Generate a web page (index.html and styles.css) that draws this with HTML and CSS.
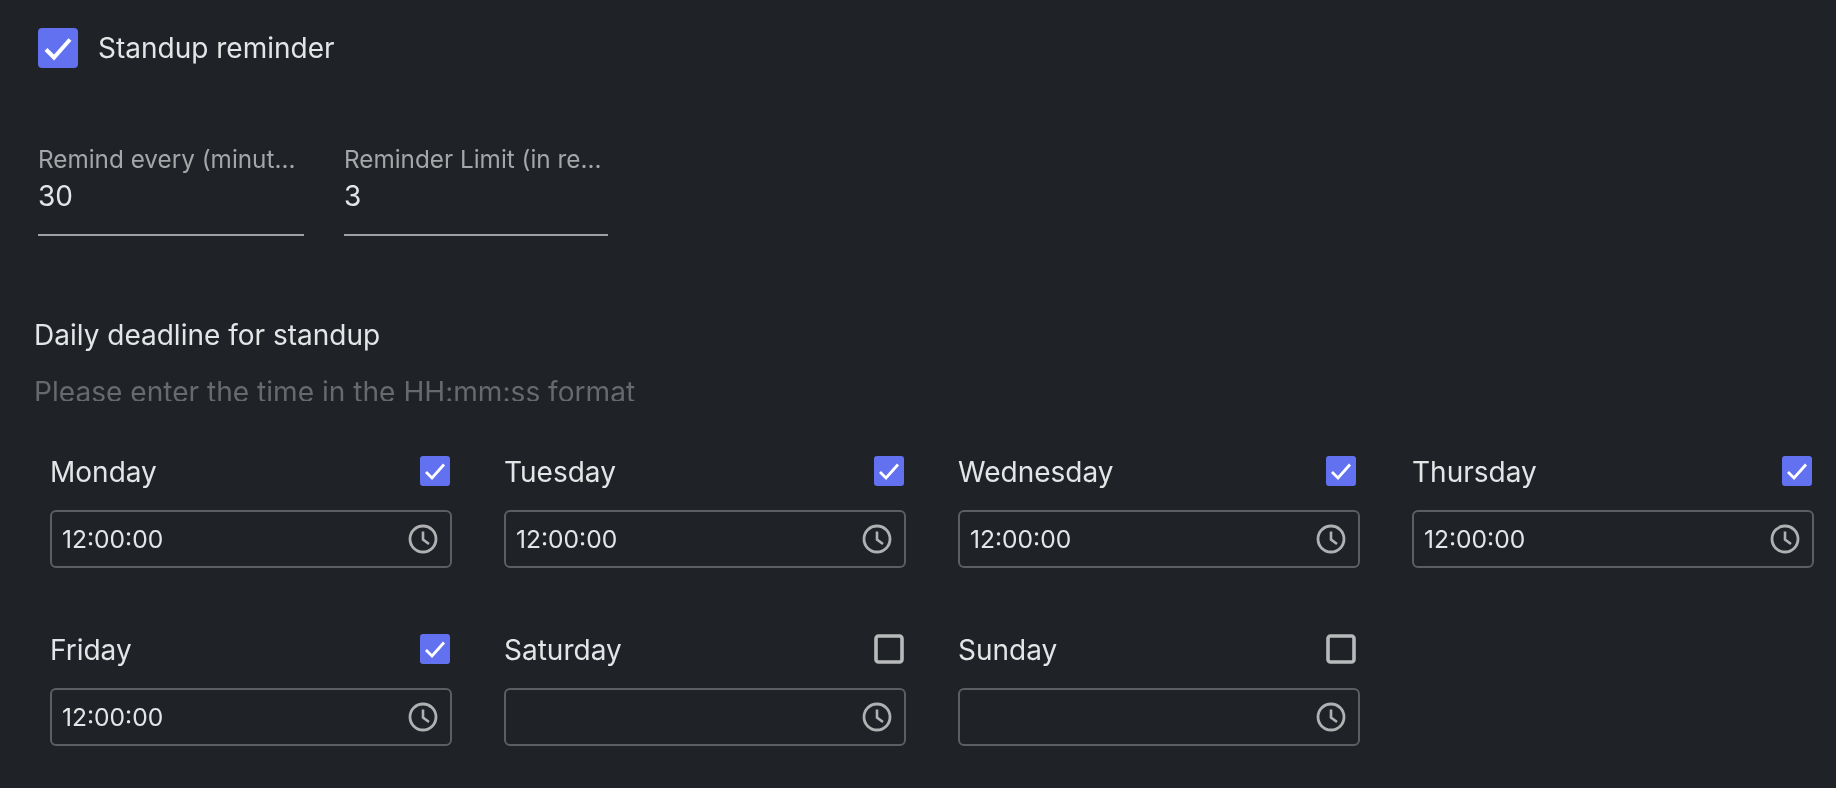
FILE: index.html
```html
<!DOCTYPE html>
<html lang="en">
<head>
<meta charset="utf-8">
<title>Standup reminder</title>
<link rel="stylesheet" href="styles.css">
</head>
<body>
<main class="page">
  <label class="main-toggle">
    <svg class="check check-lg" viewBox="0 0 40 40"><rect width="40" height="40" rx="4" fill="#6271f0"/><path d="M8 21.500 16 29.500 32 11.500" fill="none" stroke="#fff" stroke-width="4"/></svg>
    <span>Standup reminder</span>
  </label>
  <div class="limits">
    <div class="field field-a"><div class="field-label">Remind every (minut...</div><div class="field-value">30</div></div>
    <div class="field field-b"><div class="field-label">Reminder Limit (in re...</div><div class="field-value">3</div></div>
  </div>
  <section class="deadline">
    <h2 class="deadline-title">Daily deadline for standup</h2>
    <div class="deadline-clip"><p class="deadline-help">Please enter the time in the HH:mm:ss format</p></div>
  </section>
  <div class="days">
    <div class="day">
      <div class="day-head"><span>Monday</span><svg class="check" viewBox="0 0 30 30"><rect width="30" height="30" rx="3" fill="#6271f0"/><path d="M6 16 12 22 24 8.500" fill="none" stroke="#fff" stroke-width="2.800"/></svg></div>
      <div class="time-box"><span>12:00:00</span><svg class="clock" viewBox="0 0 30 30"><circle cx="15" cy="15" r="13" fill="none" stroke="#b0b1b3" stroke-width="2.800"/><path d="M15 7.500v8l6 4.500" fill="none" stroke="#b0b1b3" stroke-width="2.600"/></svg></div>
    </div>
    <div class="day">
      <div class="day-head"><span>Tuesday</span><svg class="check" viewBox="0 0 30 30"><rect width="30" height="30" rx="3" fill="#6271f0"/><path d="M6 16 12 22 24 8.500" fill="none" stroke="#fff" stroke-width="2.800"/></svg></div>
      <div class="time-box"><span>12:00:00</span><svg class="clock" viewBox="0 0 30 30"><circle cx="15" cy="15" r="13" fill="none" stroke="#b0b1b3" stroke-width="2.800"/><path d="M15 7.500v8l6 4.500" fill="none" stroke="#b0b1b3" stroke-width="2.600"/></svg></div>
    </div>
    <div class="day">
      <div class="day-head"><span>Wednesday</span><svg class="check" viewBox="0 0 30 30"><rect width="30" height="30" rx="3" fill="#6271f0"/><path d="M6 16 12 22 24 8.500" fill="none" stroke="#fff" stroke-width="2.800"/></svg></div>
      <div class="time-box"><span>12:00:00</span><svg class="clock" viewBox="0 0 30 30"><circle cx="15" cy="15" r="13" fill="none" stroke="#b0b1b3" stroke-width="2.800"/><path d="M15 7.500v8l6 4.500" fill="none" stroke="#b0b1b3" stroke-width="2.600"/></svg></div>
    </div>
    <div class="day">
      <div class="day-head"><span>Thursday</span><svg class="check" viewBox="0 0 30 30"><rect width="30" height="30" rx="3" fill="#6271f0"/><path d="M6 16 12 22 24 8.500" fill="none" stroke="#fff" stroke-width="2.800"/></svg></div>
      <div class="time-box"><span>12:00:00</span><svg class="clock" viewBox="0 0 30 30"><circle cx="15" cy="15" r="13" fill="none" stroke="#b0b1b3" stroke-width="2.800"/><path d="M15 7.500v8l6 4.500" fill="none" stroke="#b0b1b3" stroke-width="2.600"/></svg></div>
    </div>
    <div class="day">
      <div class="day-head"><span>Friday</span><svg class="check" viewBox="0 0 30 30"><rect width="30" height="30" rx="3" fill="#6271f0"/><path d="M6 16 12 22 24 8.500" fill="none" stroke="#fff" stroke-width="2.800"/></svg></div>
      <div class="time-box"><span>12:00:00</span><svg class="clock" viewBox="0 0 30 30"><circle cx="15" cy="15" r="13" fill="none" stroke="#b0b1b3" stroke-width="2.800"/><path d="M15 7.500v8l6 4.500" fill="none" stroke="#b0b1b3" stroke-width="2.600"/></svg></div>
    </div>
    <div class="day">
      <div class="day-head"><span>Saturday</span><svg class="check" viewBox="0 0 30 30"><rect x="2" y="2" width="26" height="26" rx="2.500" fill="none" stroke="#b9babb" stroke-width="3.600"/></svg></div>
      <div class="time-box"><span></span><svg class="clock" viewBox="0 0 30 30"><circle cx="15" cy="15" r="13" fill="none" stroke="#b0b1b3" stroke-width="2.800"/><path d="M15 7.500v8l6 4.500" fill="none" stroke="#b0b1b3" stroke-width="2.600"/></svg></div>
    </div>
    <div class="day">
      <div class="day-head"><span>Sunday</span><svg class="check" viewBox="0 0 30 30"><rect x="2" y="2" width="26" height="26" rx="2.500" fill="none" stroke="#b9babb" stroke-width="3.600"/></svg></div>
      <div class="time-box"><span></span><svg class="clock" viewBox="0 0 30 30"><circle cx="15" cy="15" r="13" fill="none" stroke="#b0b1b3" stroke-width="2.800"/><path d="M15 7.500v8l6 4.500" fill="none" stroke="#b0b1b3" stroke-width="2.600"/></svg></div>
    </div>
  </div>
</main>
</body>
</html>
```

FILE: styles.css
```css
* { box-sizing: border-box; }
html, body { margin: 0; height: 100%; }
body {
  background: #1f2227;
  color: #e4e5e6;
  font-family: Inter, "Liberation Sans", sans-serif;
  overflow: hidden;
}
.page { padding: 28px 22px 0 0; filter: blur(0.6px); }
.main-toggle {
  display: flex;
  align-items: center;
  gap: 20px;
  margin-left: 38px;
  height: 40px;
  font-size: 28px;
}
.check-lg { width: 40px; height: 40px; flex: none; }
.limits {
  display: flex;
  gap: 40px;
  margin: 78px 0 0 38px;
}
.field { border-bottom: 2px solid #a0a1a3; height: 90px; }
.field-a { width: 266px; }
.field-b { width: 264px; }
.field-label { font-size: 24.300px; color: #a5a6a8; line-height: 30px; white-space: nowrap; margin-top: -2px; }
.field-value { font-size: 28px; color: #e4e5e6; line-height: 36px; margin-top: 4px; }
.deadline { margin: 0 0 0 34px; padding-top: 79px; }
.deadline-title { margin: 0; font-size: 28px; font-weight: 400; line-height: 40px; color: #e4e5e6; }
.deadline-clip { height: 29px; margin-top: 17px; overflow: hidden; }
.deadline-help { margin: 0; font-size: 28.100px; line-height: 40px; color: #66696d; white-space: nowrap; }
.days {
  display: grid;
  grid-template-columns: repeat(4, 402px);
  column-gap: 52px;
  row-gap: 63px;
  margin: 52px 0 0 50px;
}
.day-head {
  display: flex;
  justify-content: space-between;
  align-items: center;
  height: 38px;
  padding-right: 2px;
  font-size: 28px;
  color: #e4e5e6;
}
.day:nth-child(4n+3) .day-head { padding-right: 4px; }
.day-head .check { width: 30px; height: 30px; flex: none; margin-bottom: 2px; }
.time-box {
  display: flex;
  justify-content: space-between;
  align-items: center;
  height: 58px;
  margin-top: 19px;
  padding: 0 12px 0 10px;
  border: 2px solid #5c5e62;
  border-radius: 6px;
  font-size: 24.600px;
  color: #e4e5e6;
}
.clock { width: 30px; height: 30px; flex: none; }
```
